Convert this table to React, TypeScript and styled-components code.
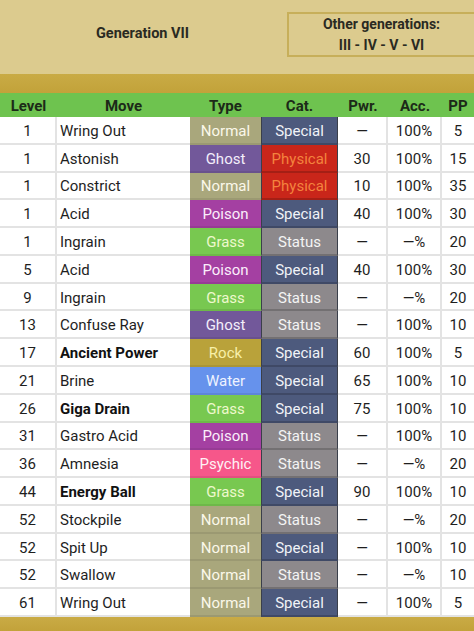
import React from "react";
import styled, { createGlobalStyle } from "styled-components";

const Global = createGlobalStyle`
  html, body { margin: 0; padding: 0; background: #ffffff; }
  body { font-family: Roboto, "Noto Sans", "Liberation Sans", sans-serif; }
  * { box-sizing: border-box; }
`;

const Page = styled.div`
  width: 474px;
  height: 631px;
  overflow: hidden;
  display: flex;
  flex-direction: column;
  background: #ffffff;
`;

const TopBar = styled.div`
  height: 74px;
  background: #dccb8e;
  display: grid;
  grid-template-columns: 287px 1fr;
  align-items: start;
`;

const GenTitle = styled.div`
  font-weight: 700;
  font-size: 14.5px;
  color: #2a2a22;
  text-align: center;
  padding-top: 25px;
  padding-right: 2px;
`;

const OtherBox = styled.div`
  margin-top: 12px;
  height: 45px;
  border: 2px solid #c7af5a;
  border-right: none;
  display: flex;
  flex-direction: column;
  align-items: center;
  justify-content: center;
  font-weight: 700;
  font-size: 14px;
  line-height: 21px;
  color: #2a2a22;
`;

const GoldBand = styled.div<{ $h: number }>`
  height: ${(p) => p.$h}px;
  background: linear-gradient(#c9ab45, #c2a23a);
  flex: none;
`;

const COLS = "57px 133px 71px 77px 50px 54px 32px";

const HeaderRow = styled.div`
  height: 24px;
  background: #6ec34f;
  display: grid;
  grid-template-columns: ${COLS};
  align-items: center;
  font-weight: 700;
  font-size: 15px;
  color: #1c2a18;
  padding-top: 1px;
`;

const HeadCell = styled.div`
  text-align: center;
`;

const Body = styled.div`
  height: 500px;
  display: grid;
  grid-template-rows: repeat(18, 1fr);
`;

const Row = styled.div`
  display: grid;
  grid-template-columns: ${COLS};
  border-bottom: 2px solid #e3e3e3;
  font-size: 15px;
  color: #1e1e1e;
`;

const Cell = styled.div<{ $align?: "left" | "center"; $line?: boolean }>`
  display: flex;
  align-items: center;
  justify-content: ${(p) => (p.$align === "left" ? "flex-start" : "center")};
  padding-left: ${(p) => (p.$align === "left" ? "3px" : "0")};
  padding-top: 2px;
  border-right: ${(p) => (p.$line ? "2px solid #e3e3e3" : "none")};
  white-space: nowrap;
`;

const MoveName = styled(Cell)<{ $bold?: boolean }>`
  font-weight: ${(p) => (p.$bold ? 700 : 400)};
  color: ${(p) => (p.$bold ? "#111" : "#1e1e1e")};
`;

const TypeCell = styled.div<{ $bg: string; $fg: string }>`
  display: flex;
  align-items: center;
  justify-content: center;
  padding-top: 2px;
  background: ${(p) => p.$bg};
  color: ${(p) => p.$fg};
  margin-bottom: -2px;
  border-bottom: 2px solid rgba(0, 0, 0, 0.08);
`;

const CatCell = styled.div<{ $bg: string; $fg: string }>`
  display: flex;
  align-items: center;
  justify-content: center;
  padding-top: 2px;
  background: ${(p) => p.$bg};
  color: ${(p) => p.$fg};
  border-left: 1px solid #3a3f4a;
  border-right: 1px solid #3a3f4a;
  margin-bottom: -2px;
  border-bottom: 2px solid rgba(0, 0, 0, 0.18);
`;

const TYPES: Record<string, { bg: string; fg: string }> = {
  Normal: { bg: "#a9a77c", fg: "#fbf8ea" },
  Ghost: { bg: "#72589a", fg: "#f3eefa" },
  Poison: { bg: "#a440a2", fg: "#fbeefb" },
  Grass: { bg: "#78c850", fg: "#eef8cc" },
  Rock: { bg: "#b9a23a", fg: "#f8f0a8" },
  Water: { bg: "#6692ec", fg: "#eef3ff" },
  Psychic: { bg: "#f6578a", fg: "#fff1f5" },
};

const CATS: Record<string, { bg: string; fg: string }> = {
  Special: { bg: "#4d5a7d", fg: "#f1f3f8" },
  Physical: { bg: "#c9261a", fg: "#f4833e" },
  Status: { bg: "#8d898c", fg: "#f4f4f4" },
};

type Move = [string, string, boolean, string, string, string, string, string];

const DASH = "\u2014";

const MOVES: Move[] = [
  ["1", "Wring Out", false, "Normal", "Special", DASH, "100%", "5"],
  ["1", "Astonish", false, "Ghost", "Physical", "30", "100%", "15"],
  ["1", "Constrict", false, "Normal", "Physical", "10", "100%", "35"],
  ["1", "Acid", false, "Poison", "Special", "40", "100%", "30"],
  ["1", "Ingrain", false, "Grass", "Status", DASH, DASH + "%", "20"],
  ["5", "Acid", false, "Poison", "Special", "40", "100%", "30"],
  ["9", "Ingrain", false, "Grass", "Status", DASH, DASH + "%", "20"],
  ["13", "Confuse Ray", false, "Ghost", "Status", DASH, "100%", "10"],
  ["17", "Ancient Power", true, "Rock", "Special", "60", "100%", "5"],
  ["21", "Brine", false, "Water", "Special", "65", "100%", "10"],
  ["26", "Giga Drain", true, "Grass", "Special", "75", "100%", "10"],
  ["31", "Gastro Acid", false, "Poison", "Status", DASH, "100%", "10"],
  ["36", "Amnesia", false, "Psychic", "Status", DASH, DASH + "%", "20"],
  ["44", "Energy Ball", true, "Grass", "Special", "90", "100%", "10"],
  ["52", "Stockpile", false, "Normal", "Status", DASH, DASH + "%", "20"],
  ["52", "Spit Up", false, "Normal", "Special", DASH, "100%", "10"],
  ["52", "Swallow", false, "Normal", "Status", DASH, DASH + "%", "10"],
  ["61", "Wring Out", false, "Normal", "Special", DASH, "100%", "5"],
];

export default function App() {
  return (
    <Page>
      <Global />
      <TopBar>
        <GenTitle>Generation VII</GenTitle>
        <OtherBox>
          <span>Other generations:</span>
          <span>III - IV - V - VI</span>
        </OtherBox>
      </TopBar>
      <GoldBand $h={19} />
      <HeaderRow>
        <HeadCell>Level</HeadCell>
        <HeadCell>Move</HeadCell>
        <HeadCell>Type</HeadCell>
        <HeadCell>Cat.</HeadCell>
        <HeadCell>Pwr.</HeadCell>
        <HeadCell>Acc.</HeadCell>
        <HeadCell>PP</HeadCell>
      </HeaderRow>
      <Body>
        {MOVES.map((m, i) => {
          const t = TYPES[m[3]];
          const c = CATS[m[4]];
          return (
            <Row key={i}>
              <Cell $line>{m[0]}</Cell>
              <MoveName $align="left" $bold={m[2]}>
                {m[1]}
              </MoveName>
              <TypeCell $bg={t.bg} $fg={t.fg}>
                {m[3]}
              </TypeCell>
              <CatCell $bg={c.bg} $fg={c.fg}>
                {m[4]}
              </CatCell>
              <Cell $line>{m[5]}</Cell>
              <Cell $line>{m[6]}</Cell>
              <Cell>{m[7]}</Cell>
            </Row>
          );
        })}
      </Body>
      <GoldBand $h={14} />
    </Page>
  );
}
